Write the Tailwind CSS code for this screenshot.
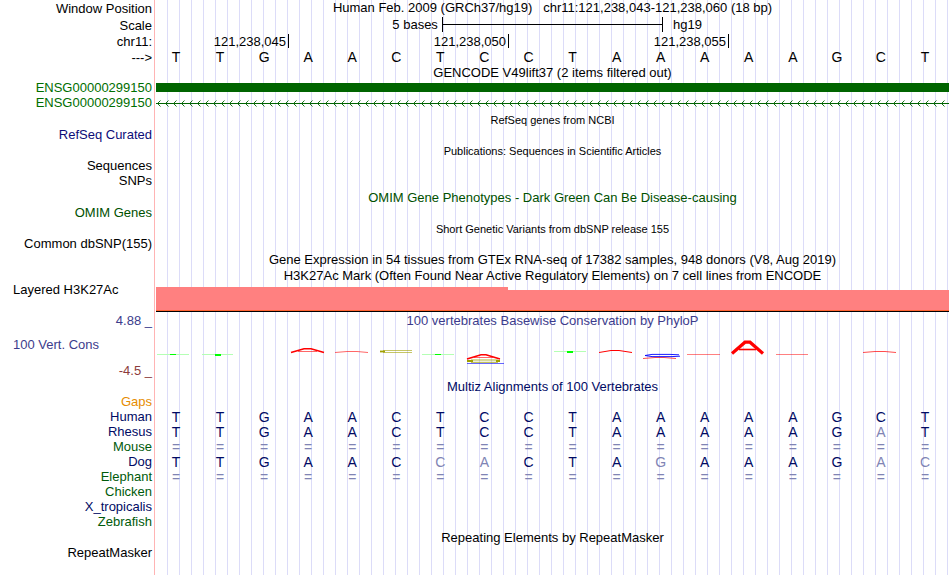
<!DOCTYPE html>
<html lang="en">
  <head>
    <meta charset="UTF-8" />
    <meta name="viewport" content="width=device-width, initial-scale=1.0" />
    <script src="https://cdn.jsdelivr.net/npm/@tailwindcss/browser@4"></script>
    <title>Human chr11:121,238,043-121,238,060</title>
  </head>

  <body class="bg-white text-black">
    <main
      class="relative flex flex-col min-h-screen pr-px font-['Liberation_Sans',Arial,sans-serif] text-[13px] leading-[14px] whitespace-pre"
    >
      <!-- guide lines behind all tracks -->
      <div
        class="absolute inset-y-0 left-[154px] right-px pl-px border-l border-[#ffb4b4] bg-origin-content bg-clip-content bg-[repeating-linear-gradient(to_right,transparent_0_11px,#dcdcf8_11px_12px)]"
      ></div>

      <div class="relative flex flex-col">
        <!-- position and ruler -->
        <div class="grid grid-cols-[152px_1fr] gap-x-1 h-[17px] items-center">
          <div class="text-right">Window Position</div>
          <h1 class="text-center h-4">Human Feb. 2009 (GRCh37/hg19)   chr11:121,238,043-121,238,060 (18 bp)</h1>
        </div>
        <div class="grid grid-cols-[152px_1fr] gap-x-1 h-[17px] items-center">
          <div class="text-right">Scale</div>
          <div class="grid grid-cols-[1fr_27.9%_1fr] h-full">
            <span class="text-right pr-1 pt-px">5 bases</span>
            <div class="h-[15px] border-x border-black flex items-center">
              <div class="w-full h-px bg-black"></div>
            </div>
            <span class="pl-2.5 pt-px">hg19</span>
          </div>
        </div>
        <div class="grid grid-cols-[152px_1fr] gap-x-1 h-4 items-center">
          <div class="text-right">chr11:</div>
          <div class="grid grid-cols-18 h-full pl-px">
            <div class="col-span-3 h-[14px] pt-px pr-0.5 flex justify-end border-r border-black">121,238,045</div>
            <div class="col-span-5 h-[14px] pt-px pr-0.5 flex justify-end border-r border-black">121,238,050</div>
            <div class="col-span-5 h-[14px] pt-px pr-0.5 flex justify-end border-r border-black">121,238,055</div>
          </div>
        </div>
        <div class="grid grid-cols-[152px_1fr] gap-x-1 h-4">
          <div class="text-right pt-px">---&gt;</div>
          <div data-seq="TTGAACTCCTAAAAAGCT" class="grid grid-cols-18 text-center -ml-0.5 mr-0.5 text-sm leading-[14px]"></div>
        </div>

        <!-- GENCODE -->
        <div class="grid grid-cols-[152px_1fr] gap-x-1 h-[14px] items-center">
          <h2 class="col-start-2 text-center">GENCODE V49lift37 (2 items filtered out)</h2>
        </div>
        <div class="grid grid-cols-[152px_1fr] gap-x-1 h-[15px] items-center text-[#006e00]">
          <div class="text-right">ENSG00000299150</div>
          <div class="h-[9px] bg-[#006400]"></div>
        </div>
        <div class="grid grid-cols-[152px_1fr] gap-x-1 h-4 items-center text-[#006e00]">
          <div class="text-right">ENSG00000299150</div>
          <svg class="w-full h-4" aria-hidden="true">
            <defs>
              <pattern id="strand" width="8" height="16" patternUnits="userSpaceOnUse">
                <path d="M0 8.5H8" stroke="#006400" />
                <path d="M4.5 5.5L1.5 8.5L4.5 11.5" fill="none" stroke="#006400" stroke-width="0.9" />
              </pattern>
            </defs>
            <rect width="100%" height="16" fill="url(#strand)" />
          </svg>
        </div>

        <!-- collapsed tracks -->
        <div class="grid grid-cols-[152px_1fr] gap-x-1 h-[17px] items-center">
          <h2 class="col-start-2 text-center text-[11px]">RefSeq genes from NCBI</h2>
        </div>
        <div class="grid grid-cols-[152px_1fr] gap-x-1 h-[14px] items-center">
          <div class="text-right text-[#0c0c78]">RefSeq Curated</div>
        </div>
        <div class="grid grid-cols-[152px_1fr] gap-x-1 h-[17px] items-center">
          <h2 class="col-start-2 text-center text-[11px]">Publications: Sequences in Scientific Articles</h2>
        </div>
        <div class="grid grid-cols-[152px_1fr] gap-x-1 h-[14px] items-center">
          <div class="text-right">Sequences</div>
        </div>
        <div class="grid grid-cols-[152px_1fr] gap-x-1 h-4 items-center">
          <div class="text-right">SNPs</div>
        </div>
        <div class="grid grid-cols-[152px_1fr] gap-x-1 h-[17px] items-center">
          <h2 class="col-start-2 text-center text-[#005000]">OMIM Gene Phenotypes - Dark Green Can Be Disease-causing</h2>
        </div>
        <div class="grid grid-cols-[152px_1fr] gap-x-1 h-[14px] items-center">
          <div class="text-right text-[#005000]">OMIM Genes</div>
        </div>
        <div class="grid grid-cols-[152px_1fr] gap-x-1 h-[17px] items-center">
          <h2 class="col-start-2 text-center text-[11px]">Short Genetic Variants from dbSNP release 155</h2>
        </div>
        <div class="grid grid-cols-[152px_1fr] gap-x-1 h-[14px] items-center">
          <div class="text-right">Common dbSNP(155)</div>
        </div>
        <div class="grid grid-cols-[152px_1fr] gap-x-1 h-[17px] items-center">
          <h2 class="col-start-2 text-center">Gene Expression in 54 tissues from GTEx RNA-seq of 17382 samples, 948 donors (V8, Aug 2019)</h2>
        </div>

        <!-- H3K27Ac -->
        <div class="grid grid-cols-[152px_1fr] gap-x-1 h-[15px] items-center">
          <h2 class="col-start-2 text-center">H3K27Ac Mark (Often Found Near Active Regulatory Elements) on 7 cell lines from ENCODE</h2>
        </div>
        <div class="grid grid-cols-[152px_1fr] gap-x-1 h-[29px]">
          <div class="pl-[13px]">Layered H3K27Ac</div>
          <div class="grid grid-cols-18 grid-rows-[24px_1px] items-end pt-1">
            <div class="col-span-8 h-6 bg-[#ff8080] border-b border-[#ff6432]"></div>
            <div class="col-span-10 h-[21px] bg-[#ff8080] border-b border-[#ff6432]"></div>
            <div class="col-span-18 h-px bg-black"></div>
          </div>
        </div>

        <!-- conservation -->
        <div class="grid grid-cols-[152px_1fr] gap-x-1 h-[18px] items-center text-[#3c3c8c]">
          <div class="text-right">4.88 _</div>
          <h2 class="text-center">100 vertebrates Basewise Conservation by PhyloP</h2>
        </div>
        <div class="grid grid-cols-[152px_1fr] gap-x-1 h-[34px]">
          <div class="pl-[13px] pt-2 text-[#3c3c8c]">100 Vert. Cons</div>
          <svg class="w-full h-[34px]" viewBox="156 330 793 34" preserveAspectRatio="none" role="img" aria-label="PhyloP scores">
            <g stroke="#b4ffb4" fill="none">
              <path d="M157 354.5H189M202 354.5H233M422 354.5H454M554 351.5H586" />
            </g>
            <g fill="#00ff00">
              <rect x="170" y="354" width="6" height="1" />
              <rect x="215" y="354" width="6" height="2" />
              <rect x="435" y="354" width="6" height="1" />
              <rect x="567" y="351" width="6" height="2" />
            </g>
            <g stroke="#ff0000" fill="none">
              <path d="M291 352.5L304 348.7H311L324 352.5" stroke-width="1.6" />
              <path d="M298 351.5H317" stroke-width="0.6" />
              <path d="M335 352.5L347 351.5H357L368 352.5" stroke-width="0.6" />
              <path d="M599 352.5L611 350.5H619L632 352.5" stroke-width="1" />
              <path d="M467 359L481 354.7H486L500 359" stroke-width="1.6" />
              <path d="M474 357.5H493" stroke-width="0.6" />
              <path d="M643 358.5L655 357.5H664L676 358.5" stroke-width="0.7" />
              <path d="M687 354.5H720M776 354.5H808" stroke-width="0.5" />
              <path d="M863 352.5L875 351.5H885L896 352.5" stroke-width="0.7" />
              <path d="M732 353.5L745 342.2H750L763 353.5" stroke-width="3.2" />
              <path d="M739 349.5H756" stroke-width="1.6" />
            </g>
            <g stroke="#a0a000" fill="none">
              <path d="M383 350.5H412M383 352.5H412" stroke-width="0.6" />
              <path d="M380 351.5H385" stroke-width="1.8" />
              <path d="M471 360H498M471 362.3H498" stroke-width="0.8" />
              <path d="M467 361H473M496 361H500" stroke-width="2" />
            </g>
            <g stroke="#0000ff" fill="none">
              <path d="M467 363.5H504" stroke-width="0.6" />
              <path d="M679 354.8L670 354.4H652L645 355.5L652 356.6H672L680 356.2" stroke-width="0.9" />
            </g>
          </svg>
        </div>
        <div class="grid grid-cols-[152px_1fr] gap-x-1 h-[14px] items-center">
          <div class="text-right text-[#8c3c3c]">-4.5 _</div>
        </div>

        <!-- multiz -->
        <div class="grid grid-cols-[152px_1fr] gap-x-1 h-[17px] items-center">
          <h2 class="col-start-2 text-center text-[#000a64]">Multiz Alignments of 100 Vertebrates</h2>
        </div>
        <div class="grid grid-cols-[152px_1fr] gap-x-1 h-[14px] items-center">
          <div class="text-right text-[#e68c00]">Gaps</div>
        </div>
        <div id="alignments" class="flex flex-col"></div>

        <!-- repeats -->
        <div class="grid grid-cols-[152px_1fr] gap-x-1 h-[17px] items-center">
          <h2 class="col-start-2 text-center">Repeating Elements by RepeatMasker</h2>
        </div>
        <div class="grid grid-cols-[152px_1fr] gap-x-1 h-3 items-center">
          <div class="text-right">RepeatMasker</div>
        </div>
      </div>
    </main>
  </body>
  <script>
    const human = 'TTGAACTCCTAAAAAGCT'
    const species = [
      { name: 'Human', color: 'text-[#000a64]', seq: human },
      { name: 'Rhesus', color: 'text-[#000a64]', seq: 'TTGAACTCCTAAAAAGAT' },
      { name: 'Mouse', color: 'text-[#005a0a]', seq: '==================' },
      { name: 'Dog', color: 'text-[#000a64]', seq: 'TTGAACCACTAGAAAGAC' },
      { name: 'Elephant', color: 'text-[#005a0a]', seq: '==================' },
      { name: 'Chicken', color: 'text-[#005a0a]', seq: '' },
      { name: 'X_tropicalis', color: 'text-[#000a64]', seq: '' },
      { name: 'Zebrafish', color: 'text-[#005a0a]', seq: '' }
    ]

    document.querySelectorAll('[data-seq]').forEach(row => {
      row.innerHTML = [...row.dataset.seq].map(base => `<span>${base}</span>`).join('')
    })

    // bases that differ from human are drawn lighter
    species.forEach(s => {
      const bases = [...s.seq]
        .map((base, i) => {
          const color = base === human[i] ? 'text-[#000a64]' : 'text-[#8084b4]'
          return `<span class="${color}">${base}</span>`
        })
        .join('')
      document.getElementById('alignments').innerHTML += `<div class="grid grid-cols-[152px_1fr] gap-x-1 h-[15px] items-center">
          <div class="text-right ${s.color}">${s.name}</div>
          <div class="grid grid-cols-18 text-center -ml-0.5 mr-0.5 text-sm leading-[14px]">${bases}</div>
        </div>`
    })
  </script>
</html>
